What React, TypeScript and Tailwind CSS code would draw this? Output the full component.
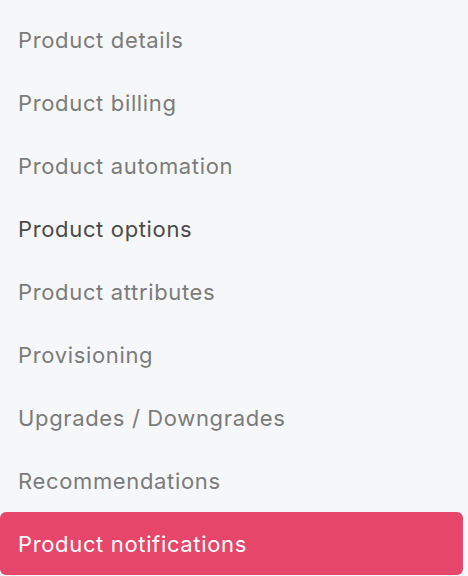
const items = [
  'Product details',
  'Product billing',
  'Product automation',
  'Product options',
  'Product attributes',
  'Provisioning',
  'Upgrades / Downgrades',
  'Recommendations',
  'Product notifications',
]

const hovered = 'Product options'
const active = 'Product notifications'

export default function App() {
  return (
    <div className="h-[576px] w-[468px] overflow-hidden bg-[#f6f7f9] pt-2 pr-[5px] font-['Inter','Liberation_Sans',sans-serif]">
      <ul className="flex flex-col">
        {items.map((item) => (
          <li key={item}>
            <a
              href="#"
              className={
                item === active
                  ? 'flex h-[63px] items-center rounded-md bg-[#e5466a] pt-[2px] pl-[18px] text-[22px] tracking-[0.65px] text-white'
                  : item === hovered
                    ? 'flex h-[63px] items-center pt-[2px] pl-[18px] text-[22px] tracking-[0.65px] text-[#4a4a4a]'
                    : 'flex h-[63px] items-center pt-[2px] pl-[18px] text-[22px] tracking-[0.65px] text-[#7b7b7b]'
              }
            >
              {item}
            </a>
          </li>
        ))}
      </ul>
    </div>
  )
}
